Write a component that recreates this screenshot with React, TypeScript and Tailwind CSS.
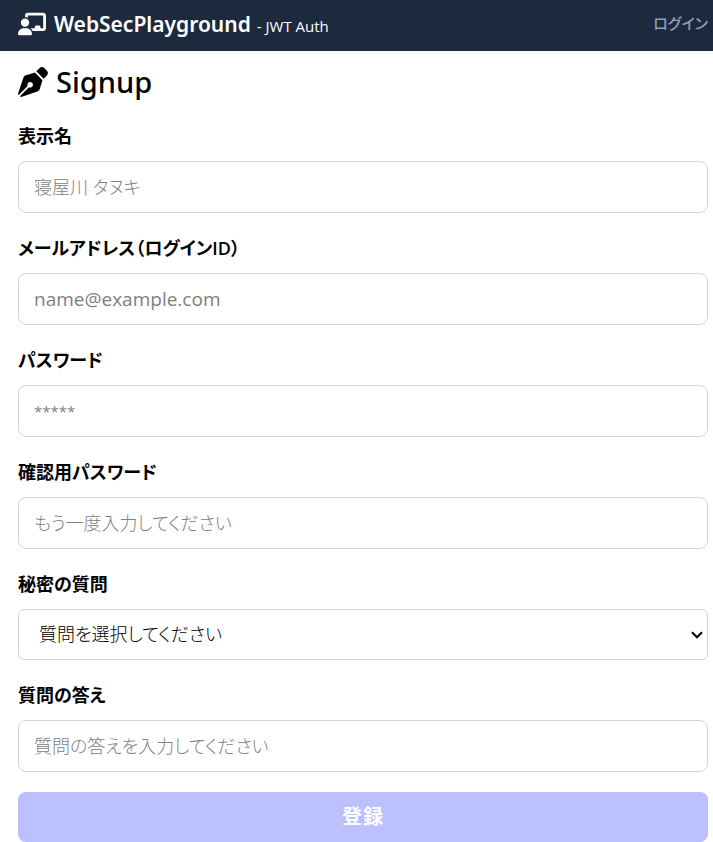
import type { InputHTMLAttributes } from "react";
import { FaChalkboardUser, FaPenNib } from "react-icons/fa6";

const controlBorder = "w-full border border-gray-300 bg-white";

type FieldProps = InputHTMLAttributes<HTMLInputElement> & {
  id: string;
  label: string;
  textClass?: string;
};

function FieldLabel({ htmlFor, text }: { htmlFor: string; text: string }) {
  return (
    <label htmlFor={htmlFor} className="mb-3 block text-[18px] leading-[26px] font-semibold">
      {text}
    </label>
  );
}

function Field({ id, label, textClass = "text-[18px] font-light", ...rest }: FieldProps) {
  return (
    <div>
      <FieldLabel htmlFor={id} text={label} />
      <input
        id={id}
        className={`${controlBorder} block h-[52px] rounded-lg px-[15px] placeholder:text-[#808080] ${textClass}`}
        {...rest}
      />
    </div>
  );
}

export default function App() {
  return (
    <div className="bg-white font-['Open_Sans','Noto_Sans_CJK_JP',sans-serif] text-black [font-feature-settings:'palt']">
      <header className="flex h-[51px] items-center justify-between bg-slate-800 pr-[5px] pb-1 pl-[18px] text-white">
        <div className="flex items-center gap-2">
          <FaChalkboardUser className="size-7" />
          <div className="flex items-baseline gap-[6px]">
            <span className="font-['Noto_Sans',sans-serif] text-[21px] leading-8 font-semibold">
              WebSecPlayground
            </span>
            <span className="text-[15px]">- JWT Auth</span>
          </div>
        </div>
        <a href="#login" className="text-[15px] font-medium text-slate-400">
          ログイン
        </a>
      </header>

      <main className="pt-[11px] pr-[5px] pl-[18px]">
        <h1 className="mb-[21px] flex h-10 items-center gap-2 font-['Noto_Sans',sans-serif] text-[29px] leading-10 font-medium">
          <FaPenNib className="size-[30px]" />
          Signup
        </h1>

        <form className="flex flex-col gap-[22px]">
          <Field id="name" label="表示名" type="text" placeholder="寝屋川 タヌキ" />
          <Field
            id="email"
            label="メールアドレス（ログインID）"
            type="email"
            placeholder="name@example.com"
            textClass="text-[19px]"
          />
          <Field id="password" label="パスワード" type="password" placeholder="*****" textClass="text-[15px]" />
          <Field id="confirm" label="確認用パスワード" type="password" placeholder="もう一度入力してください" />
          <div>
            <FieldLabel htmlFor="question" text="秘密の質問" />
            <div className="relative">
              <select
                id="question"
                className={`${controlBorder} block h-[51px] appearance-none rounded-md px-5 text-[18px] font-light`}
              >
                <option>質問を選択してください</option>
              </select>
              <svg
                viewBox="0 0 12 8"
                aria-hidden="true"
                className="pointer-events-none absolute inset-y-0 right-[5px] my-auto h-2 w-3"
              >
                <path d="M1 1.2 L6 6.2 L11 1.2" fill="none" stroke="currentColor" strokeWidth="2.2" />
              </svg>
            </div>
          </div>
          <div className="flex flex-col gap-5">
            <Field id="answer" label="質問の答え" type="text" placeholder="質問の答えを入力してください" />
            <button
              type="submit"
              disabled
              className="h-[50px] w-full rounded-lg bg-[#bcc0ff] text-[20px] font-bold tracking-wider text-white"
            >
              登録
            </button>
          </div>
        </form>
      </main>
    </div>
  );
}
